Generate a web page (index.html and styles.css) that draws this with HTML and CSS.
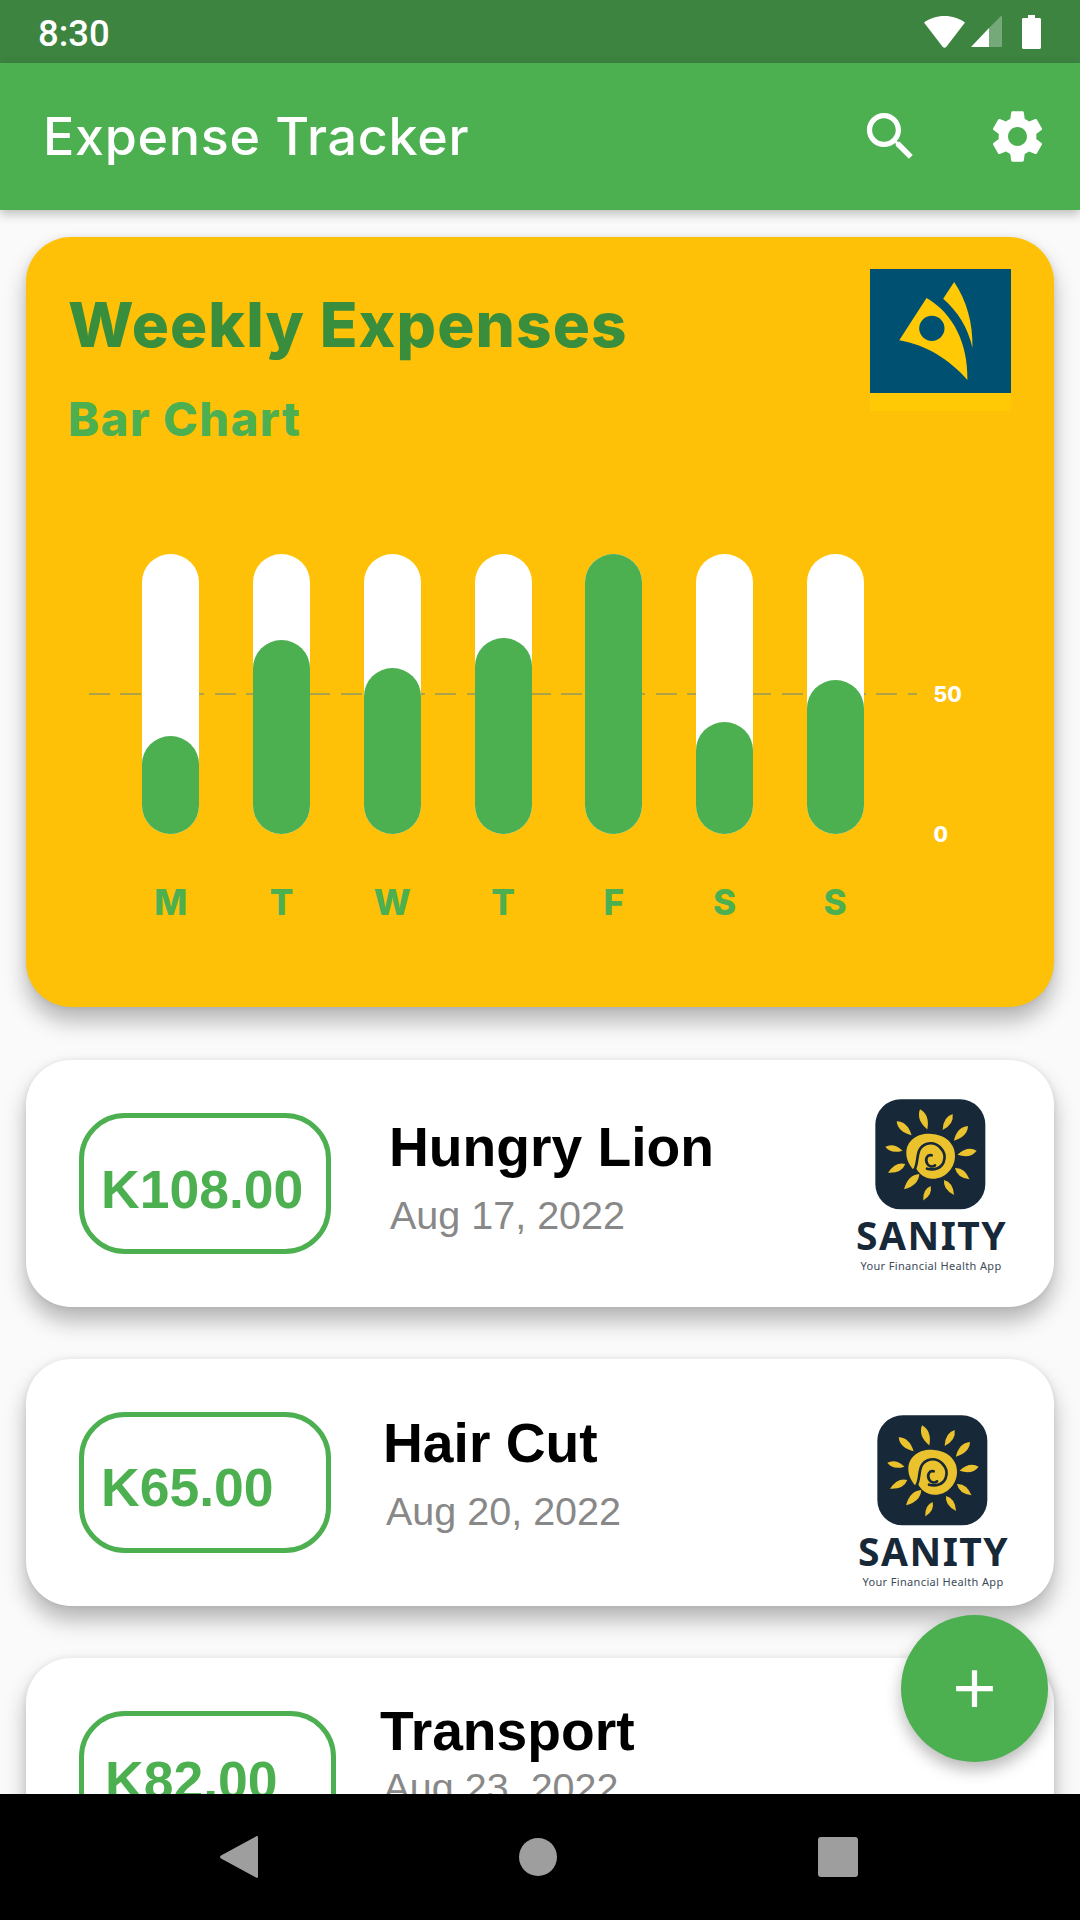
FILE: index.html
```html
<!DOCTYPE html>
<html lang="en">

<head>
    <meta charset="UTF-8" />
    <meta name="viewport" content="width=device-width, initial-scale=1.0" />
    <title>Expense Tracker</title>
    <link rel="stylesheet" href="styles.css">
</head>

<body>
    <svg class="defs" width="0" height="0">
        <path id="ray" d="M0 0Q24 -21 60 0Q24 21 0 0Z" />
        <symbol id="sanity" viewBox="0 0 600 420">
            <rect x="106" y="58" width="330" height="330" rx="76" fill="#172838" />
            <g fill="#e9c22d">
                <use href="#ray" transform="translate(240 88) rotate(70) scale(1.07)" />
                <use href="#ray" transform="translate(170 124) rotate(43) scale(1.02)" />
                <use href="#ray" transform="translate(338 102) rotate(122) scale(.95)" />
                <use href="#ray" transform="translate(384 138) rotate(134) scale(1.02)" />
                <use href="#ray" transform="translate(136 200) rotate(13) scale(.88)" />
                <use href="#ray" transform="translate(410 212) rotate(168) scale(.98)" />
                <use href="#ray" transform="translate(196 252) rotate(153) scale(.97)" />
                <use href="#ray" transform="translate(345 264) rotate(38) scale(.92)" />
                <use href="#ray" transform="translate(238 282) rotate(135) scale(1.08)" />
                <use href="#ray" transform="translate(312 300) rotate(56) scale(.9)" />
                <use href="#ray" transform="translate(272 318) rotate(117) scale(.82)" />
            </g>
            <g transform="translate(165 120)">
                <path fill="#e9c22d" d="M34 100C34 60 70 38 110 42C155 45 182 75 180 110C178 150 145 178 112 176C88 175 72 160 64 146L52 146C42 132 34 118 34 100Z" />
                <path fill="none" stroke="#172838" stroke-width="8" stroke-linecap="round" d="M58 150C74 122 58 86 94 72C126 62 158 94 146 126C138 146 116 152 96 146" />
                <path fill="none" stroke="#172838" stroke-width="8" stroke-linecap="round" d="M110 106C96 102 90 118 96 130C100 140 112 142 120 136" />
            </g>
        </symbol>
    </svg>

    <div class="screen">
        <div class="status-bar">
            <span class="time">8:30</span>
            <div class="status-icons">
                <svg class="wifi" viewBox="0 0 41 32"><path d="M20.5 0C12.5 0 5.7 2.6 0 6.5L18.6 30.800C19.600 32 21.400 32 22.400 30.800L41 6.500C35.300 2.600 28.500 0 20.500 0Z" /></svg>
                <svg class="signal" viewBox="0 0 31 31">
                    <path d="M18 12L0 31H18Z" />
                    <path class="dim" d="M18 12L30 0C30.600 0 31 .4 31 1V30C31 30.600 30.600 31 30 31H18Z" />
                </svg>
                <svg class="battery" viewBox="0 0 19 34"><path d="M6 0H13V3H17.500C18.300 3 19 3.700 19 4.500V32.500C19 33.300 18.300 34 17.500 34H1.500C.7 34 0 33.300 0 32.500V4.500C0 3.700 .7 3 1.500 3H6Z" /></svg>
            </div>
        </div>

        <header class="app-bar">
            <h1>Expense Tracker</h1>
            <div class="actions">
                <svg viewBox="0 0 24 24"><path d="M15.500 14h-.79l-.28-.27C15.410 12.590 16 11.110 16 9.500 16 5.910 13.090 3 9.500 3S3 5.910 3 9.500 5.910 16 9.500 16c1.610 0 3.090-.59 4.230-1.570l.27.28v.79l5 4.990L20.490 19l-4.990-5zm-6 0C7.010 14 5 11.990 5 9.500S7.010 5 9.500 5 14 7.010 14 9.500 11.990 14 9.500 14z" /></svg>
                <svg viewBox="0 0 24 24"><path d="M19.140 12.940c.04-.3.060-.61.060-.94 0-.32-.02-.64-.07-.94l2.030-1.580c.18-.14.230-.41.120-.61l-1.920-3.320c-.12-.22-.37-.29-.59-.22l-2.390.96c-.5-.38-1.030-.7-1.620-.94l-.36-2.540c-.04-.24-.24-.41-.48-.41h-3.840c-.24 0-.43.17-.47.41l-.36 2.540c-.59.24-1.130.57-1.620.94l-2.390-.96c-.22-.08-.47 0-.59.22L2.740 8.870c-.12.21-.08.47.12.61l2.030 1.580c-.05.3-.09.63-.09.94s.02.64.07.94l-2.030 1.580c-.18.14-.23.41-.12.61l1.920 3.320c.12.22.37.29.59.22l2.390-.96c.5.38 1.030.7 1.620.94l.36 2.540c.05.24.24.41.48.41h3.840c.24 0 .44-.17.47-.41l.36-2.540c.59-.24 1.130-.56 1.620-.94l2.390.96c.22.08.47 0 .59-.22l1.920-3.320c.12-.22.07-.47-.12-.61l-2.010-1.580zM12 15.600c-1.980 0-3.600-1.620-3.600-3.600s1.620-3.600 3.600-3.600 3.600 1.620 3.600 3.600-1.620 3.600-3.600 3.600z" /></svg>
            </div>
        </header>

        <main class="content">
            <section class="chart-card">
                <div class="chart-head">
                    <div class="chart-titles">
                        <h2>Weekly Expenses</h2>
                        <h3>Bar Chart</h3>
                    </div>
                    <div class="brand">
                        <svg viewBox="150 58 424 370">
                            <path fill="#ffca05" d="M320 144C400 190 445 280 443 390C390 330 320 285 238 271Z" />
                            <circle cx="336" cy="235" r="38" fill="#005072" />
                            <path fill="#ffca05" d="M403 96C440 150 460 220 458 293C445 235 415 185 370 146Z" />
                        </svg>
                    </div>
                </div>

                <div class="chart">
                    <div class="dash-line"></div>
                    <span class="axis axis-50">50</span>
                    <span class="axis axis-0">0</span>
                    <div class="days">
                        <div class="day"><div class="track"><div class="fill" style="height: 35%"></div></div><span>M</span></div>
                        <div class="day"><div class="track"><div class="fill" style="height: 69.300%"></div></div><span>T</span></div>
                        <div class="day"><div class="track"><div class="fill" style="height: 59.300%"></div></div><span>W</span></div>
                        <div class="day"><div class="track"><div class="fill" style="height: 70%"></div></div><span>T</span></div>
                        <div class="day"><div class="track"><div class="fill" style="height: 100%"></div></div><span>F</span></div>
                        <div class="day"><div class="track"><div class="fill" style="height: 40%"></div></div><span>S</span></div>
                        <div class="day"><div class="track"><div class="fill" style="height: 55%"></div></div><span>S</span></div>
                    </div>
                </div>
            </section>

            <section class="expense expense-a">
                <div class="amount">K108.00</div>
                <div class="details">
                    <div class="name">Hungry Lion</div>
                    <div class="date">Aug 17, 2022</div>
                </div>
                <div class="logo">
                    <svg><use href="#sanity" width="200" height="140" /></svg>
                    <div class="logo-name">SANITY</div>
                    <div class="logo-tag">Your Financial Health App</div>
                </div>
            </section>

            <section class="expense expense-b">
                <div class="amount">K65.00</div>
                <div class="details">
                    <div class="name">Hair Cut</div>
                    <div class="date">Aug 20, 2022</div>
                </div>
                <div class="logo">
                    <svg><use href="#sanity" width="200" height="140" /></svg>
                    <div class="logo-name">SANITY</div>
                    <div class="logo-tag">Your Financial Health App</div>
                </div>
            </section>

            <section class="expense expense-c">
                <div class="amount">K82.00</div>
                <div class="details">
                    <div class="name">Transport</div>
                    <div class="date">Aug 23, 2022</div>
                </div>
            </section>
        </main>

        <button class="fab" aria-label="Add expense">
            <svg viewBox="0 0 24 24"><path d="M19 13h-6v6h-2v-6H5v-2h6V5h2v6h6v2z" /></svg>
        </button>

        <nav class="nav-bar">
            <svg class="nav-back" viewBox="0 0 38 42"><path d="M36 .4C37 -.4 38 .2 38 1.500V40.500C38 41.800 37 42.400 36 41.600L1 22.500C-.3 21.700 -.3 20.300 1 19.500Z" /></svg>
            <svg class="nav-home" viewBox="0 0 38 38"><circle cx="19" cy="19" r="19" /></svg>
            <svg class="nav-recent" viewBox="0 0 40 40"><rect width="40" height="40" rx="3" /></svg>
        </nav>
    </div>
</body>

</html>
```

FILE: styles.css
```css
body {
    margin: 0;
    padding: 0;
    background-color: #fafafa;
    font-family: "Liberation Sans", Arial, sans-serif;
}

.defs {
    position: absolute;
}

.screen {
    position: relative;
    display: flex;
    flex-direction: column;
    width: 1080px;
    height: 1920px;
    overflow: hidden;
}

.status-bar {
    display: flex;
    flex: none;
    justify-content: space-between;
    align-items: center;
    height: 63px;
    padding: 0 39px 0 38px;
    box-sizing: border-box;
    background-color: #3c8440;
    color: #fff;
}

.time {
    padding-top: 4px;
    font-family: Roboto, sans-serif;
    font-size: 36.500px;
    font-weight: 500;
}

.status-icons {
    display: flex;
    align-items: center;
    fill: #fff;
}

.wifi {
    width: 41px;
    height: 32px;
    margin-right: 6px;
}

.signal {
    width: 31px;
    height: 31px;
    margin-right: 20px;
}

.signal .dim {
    fill: rgba(255, 255, 255, 0.3);
}

.battery {
    width: 19px;
    height: 34px;
}

.app-bar {
    position: relative;
    z-index: 2;
    display: flex;
    flex: none;
    justify-content: space-between;
    align-items: center;
    height: 147px;
    padding: 0 31px 0 43px;
    background-color: #4caf50;
    box-shadow: 0 4px 10px rgba(0, 0, 0, 0.25);
}

.app-bar h1 {
    margin: 0;
    font-family: Inter, sans-serif;
    font-size: 52px;
    font-weight: 500;
    letter-spacing: 0.7px;
    color: #fff;
}

.actions {
    display: flex;
    gap: 64px;
    fill: #fff;
}

.actions svg {
    width: 63px;
    height: 63px;
}

.content {
    flex: 1;
    min-height: 0;
    overflow: hidden;
    padding: 27px 26px 0;
}

.chart-card {
    box-sizing: border-box;
    height: 770px;
    padding: 32px 43px 0 42px;
    border-radius: 45px;
    background-color: #ffc107;
    box-shadow: 0 14px 22px rgba(0, 0, 0, 0.28), 0 0 6px rgba(0, 0, 0, 0.08);
}

.chart-head {
    display: flex;
    justify-content: space-between;
    height: 175px;
}

.chart-titles {
    padding-top: 18px;
}

.chart-titles h2 {
    margin: 0 0 31px;
    font-family: Inter, sans-serif;
    font-size: 62px;
    font-weight: 800;
    line-height: 76px;
    letter-spacing: 1.100px;
    color: #388e3c;
}

.chart-titles h3 {
    margin: 0;
    font-family: Inter, sans-serif;
    font-size: 47px;
    font-weight: 800;
    line-height: 50px;
    letter-spacing: 1.500px;
    color: #4caf50;
}

.brand {
    width: 141px;
    height: 142px;
    background-color: #ffca05;
}

.brand svg {
    display: block;
    width: 141px;
    height: 124px;
    background-color: #005072;
}

.chart {
    position: relative;
    width: 775px;
    margin: 110px 0 0 47.500px;
}

.dash-line {
    position: absolute;
    top: 139px;
    left: -27px;
    width: 828px;
    height: 2px;
    background: repeating-linear-gradient(90deg, #ada24a 0, #ada24a 21px, transparent 21px, transparent 31.500px);
}

.axis {
    position: absolute;
    left: 818px;
    font-family: Inter, sans-serif;
    font-size: 21px;
    font-weight: 800;
    line-height: 24px;
    color: #fff;
}

.axis-50 {
    top: 129px;
}

.axis-0 {
    top: 269px;
}

.days {
    position: relative;
    display: flex;
}

.day {
    display: flex;
    flex: 1;
    flex-direction: column;
    align-items: center;
    font-family: Inter, sans-serif;
    font-size: 35px;
    font-weight: 800;
    color: #4caf50;
}

.day span {
    margin-top: 47px;
    line-height: 42px;
}

.track {
    display: flex;
    align-items: flex-end;
    width: 57px;
    height: 280px;
    border-radius: 29px;
    background-color: #fff;
}

.fill {
    width: 100%;
    border-radius: 29px;
    background-color: #4caf50;
}

.expense {
    display: flex;
    align-items: flex-start;
    box-sizing: border-box;
    height: 247px;
    margin-top: 52px;
    padding-left: 53px;
    border-radius: 45px;
    background-color: #fff;
    box-shadow: 0 14px 22px rgba(0, 0, 0, 0.28), 0 0 6px rgba(0, 0, 0, 0.08);
}

.amount {
    flex: none;
    display: flex;
    align-items: center;
    box-sizing: border-box;
    width: 252px;
    height: 141px;
    margin-top: 53px;
    padding: 12px 0 0 17px;
    border: 5px solid #4caf50;
    border-radius: 46px;
    font-size: 53.500px;
    font-weight: 700;
    color: #4caf50;
}

.name {
    font-size: 55.200px;
    font-weight: 700;
    line-height: 60px;
    color: #000;
}

.date {
    font-size: 39.500px;
    line-height: 44px;
    color: #888;
}

.logo {
    width: 200px;
    margin-left: auto;
    color: #172838;
    text-align: center;
}

.logo svg {
    display: block;
    width: 200px;
    height: 140px;
}

.logo-name {
    width: 150px;
    margin: 0 0 0 16px;
    font-family: "Noto Sans", sans-serif;
    font-size: 39px;
    font-weight: 700;
    line-height: 29px;
    letter-spacing: 1.500px;
}

.logo-tag {
    display: flex;
    justify-content: center;
    width: 150px;
    margin: 10px 0 0 16px;
    font-family: "Noto Sans", sans-serif;
    font-size: 11px;
    line-height: 14px;
    letter-spacing: 0.35px;
    white-space: nowrap;
    color: #3c4a58;
}

.expense-a {
    margin-top: 53px;
}

.expense-a .details {
    margin: 57px 0 0 58px;
}

.expense-a .date {
    margin: 16px 0 0 1px;
}

.expense-a .logo {
    margin-top: 20px;
    margin-right: 14px;
}

.expense-b .amount {
    padding-top: 10px;
}

.expense-b .details {
    margin: 54px 0 0 52px;
}

.expense-b .date {
    margin: 16px 0 0 3px;
}

.expense-b .logo {
    margin-top: 37px;
    margin-right: 12px;
}

.expense-c .amount {
    width: 257px;
    height: 200px;
    align-items: flex-start;
    padding: 34px 0 0 21px;
}

.expense-c .details {
    margin: 43px 0 0 44px;
}

.expense-c .date {
    margin: 4px 0 0 3.500px;
}

.fab {
    position: absolute;
    top: 1615px;
    left: 901px;
    display: flex;
    justify-content: center;
    align-items: center;
    width: 147px;
    height: 147px;
    padding: 0;
    border: none;
    border-radius: 50%;
    background-color: #4caf50;
    box-shadow: 0 8px 16px rgba(0, 0, 0, 0.28);
    fill: #fff;
}

.fab svg {
    width: 63px;
    height: 63px;
}

.nav-bar {
    display: flex;
    flex: none;
    justify-content: space-between;
    align-items: center;
    height: 126px;
    padding: 0 222px 0 220px;
    background-color: #000;
    fill: #9e9e9e;
}

.nav-back {
    width: 38px;
    height: 42px;
}

.nav-home {
    width: 38px;
    height: 38px;
}

.nav-recent {
    width: 40px;
    height: 40px;
}
```
